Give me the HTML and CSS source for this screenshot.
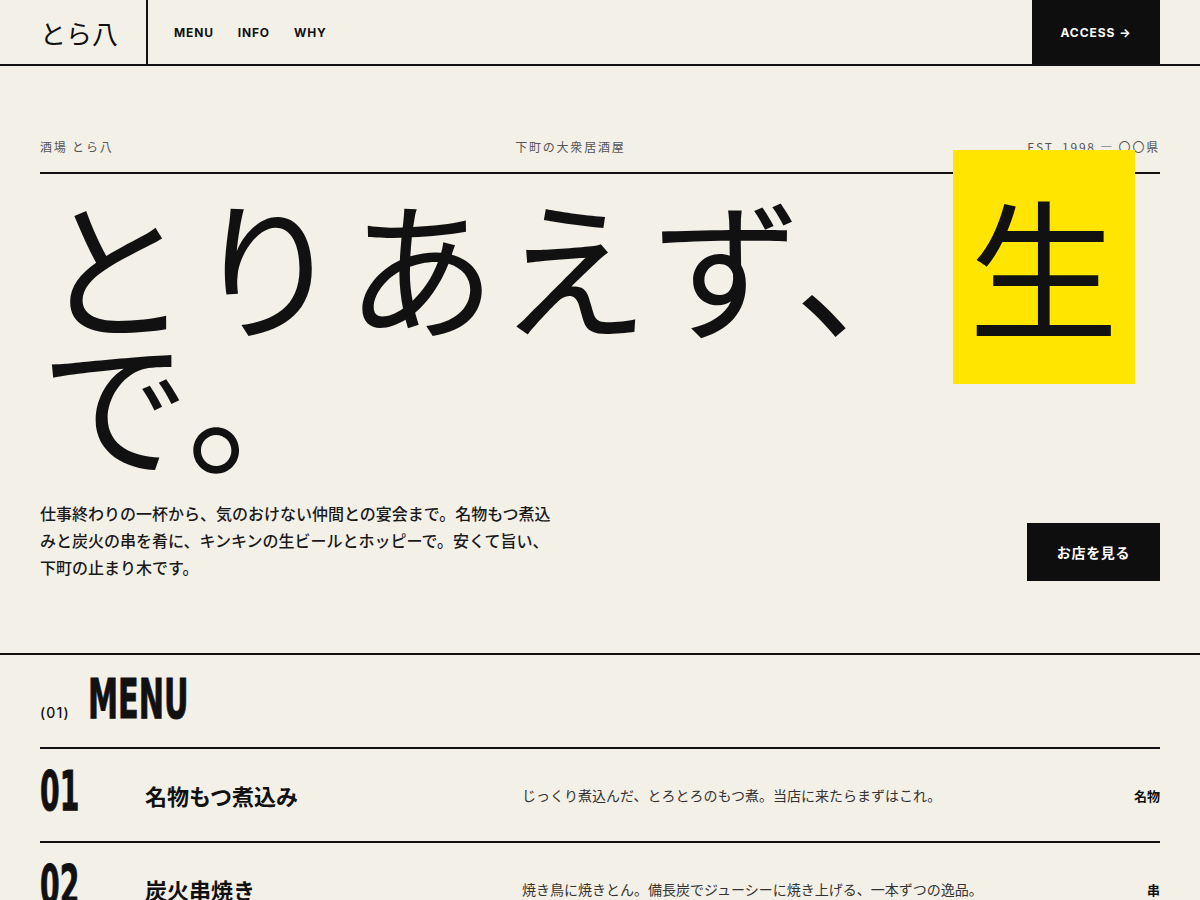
FILE: index.html
```html
<!DOCTYPE html>
<html lang="ja">
<head>
<meta charset="utf-8">
<title>とら八</title>
<link rel="stylesheet" href="styles.css">
</head>
<body>
<header class="site-header">
  <div class="logo">とら八</div>
  <nav class="nav">
    <a class="nav-link" href="#menu">MENU</a>
    <a class="nav-link" href="#info">INFO</a>
    <a class="nav-link" href="#why">WHY</a>
  </nav>
  <a class="access" href="#access">ACCESS →</a>
</header>

<section class="hero">
  <div class="hero-labels">
    <span>酒場 とら八</span>
    <span>下町の大衆居酒屋</span>
    <span>EST. 1998 — 〇〇県</span>
  </div>
  <h1 class="hero-title">とりあえず、<span class="hl">生</span>で。</h1>
  <div class="hero-foot">
    <p class="hero-text">仕事終わりの一杯から、気のおけない仲間との宴会まで。名物もつ煮込みと炭火の串を肴に、キンキンの生ビールとホッピーで。安くて旨い、下町の止まり木です。</p>
    <a class="shop-btn" href="#info">お店を見る</a>
  </div>
</section>

<section class="menu" id="menu">
  <div class="section-head">
    <span class="section-num">(01)</span>
    <h2 class="section-title"><span class="cond">MENU</span></h2>
  </div>
  <div class="menu-row">
    <div class="row-num"><span class="cond">01</span></div>
    <div class="row-name">名物もつ煮込み</div>
    <div class="row-desc">じっくり煮込んだ、とろとろのもつ煮。当店に来たらまずはこれ。</div>
    <div class="row-tag">名物</div>
  </div>
  <div class="menu-row">
    <div class="row-num"><span class="cond">02</span></div>
    <div class="row-name">炭火串焼き</div>
    <div class="row-desc">焼き鳥に焼きとん。備長炭でジューシーに焼き上げる、一本ずつの逸品。</div>
    <div class="row-tag">串</div>
  </div>
</section>
</body>
</html>
```

FILE: styles.css
```css
* { box-sizing: border-box; }
html, body { margin: 0; padding: 0; }
body {
  background: #f3f0e8;
  color: #111;
  font-family: Inter, "Noto Sans CJK JP", sans-serif;
}
a { color: inherit; text-decoration: none; }

.site-header {
  display: flex;
  align-items: stretch;
  height: 66px;
  border-bottom: 2px solid #111;
  padding-right: 40px;
}
.logo {
  display: flex;
  align-items: center;
  padding: 0 28px 0 40px;
  border-right: 2px solid #111;
  font-family: "Noto Sans CJK JP", sans-serif;
  font-size: 26px;
}
.nav {
  display: flex;
  align-items: center;
  gap: 24px;
  padding-left: 26px;
  flex: 1;
}
.nav-link {
  font-size: 12px;
  font-weight: 700;
  letter-spacing: 0.07em;
}
.access {
  display: flex;
  align-items: center;
  justify-content: center;
  width: 128px;
  background: #0e0e0e;
  color: #fff;
  font-size: 12px;
  font-weight: 700;
  letter-spacing: 0.08em;
}

.hero {
  padding: 72px 40px 72px;
  border-bottom: 2px solid #111;
}
.hero-labels {
  position: relative;
  z-index: 0;
  display: flex;
  justify-content: space-between;
  font-family: "Noto Sans CJK JP", sans-serif;
  font-size: 12px;
  line-height: 18px;
  letter-spacing: 0.15em;
  color: #555;
  padding-bottom: 16px;
  border-bottom: 2px solid #111;
}
.hero-title {
  position: relative;
  z-index: 1;
  margin: 21px 0 0;
  font-family: "Noto Sans CJK JP", sans-serif;
  font-weight: 400;
  font-size: 150px;
  line-height: 136px;
  letter-spacing: 3px;
}
.hl {
  background: #ffe500;
  padding: 4px 13px 13px 16px;
  margin-left: 5px;
}
.hero-foot {
  display: flex;
  justify-content: space-between;
  align-items: flex-end;
  margin-top: 33px;
}
.hero-text {
  margin: 0;
  max-width: 520px;
  font-family: "Noto Sans CJK JP", sans-serif;
  font-size: 16px;
  font-weight: 500;
  line-height: 27px;
  color: #1a1a1a;
}
.shop-btn {
  display: flex;
  align-items: center;
  justify-content: center;
  width: 133px;
  height: 58px;
  background: #0e0e0e;
  color: #fff;
  font-family: "Noto Sans CJK JP", sans-serif;
  font-size: 14px;
  font-weight: 700;
  letter-spacing: 0.05em;
}

.menu {
  padding: 0 40px;
}
.cond {
  display: inline-block;
  font-family: "DejaVu Sans Condensed", "DejaVu Sans", sans-serif;
  font-stretch: condensed;
  font-weight: 700;
  transform: scaleX(0.6);
  transform-origin: left center;
  -webkit-text-stroke: 1px #111;
}
.section-head {
  display: flex;
  align-items: baseline;
  gap: 18px;
  padding: 15px 0 20px;
  border-bottom: 2px solid #111;
}
.section-num {
  font-size: 14px;
  font-weight: 500;
  letter-spacing: 0.08em;
}
.section-title {
  margin: 0;
  font-size: 56px;
  line-height: 56px;
  font-weight: 700;
}
.menu-row {
  display: grid;
  grid-template-columns: 105px 377px 1fr auto;
  align-items: center;
  height: 94px;
  border-bottom: 2px solid #111;
}
.row-num {
  font-size: 56px;
  line-height: 56px;
  margin-top: -10px;
}
.row-num .cond {
  transform: scaleX(0.56);
}
.row-name {
  font-family: "Noto Sans CJK JP", sans-serif;
  font-size: 22px;
  font-weight: 700;
}
.row-desc {
  font-family: "Noto Sans CJK JP", sans-serif;
  font-size: 14px;
  color: #333;
}
.row-tag {
  font-family: "Noto Sans CJK JP", sans-serif;
  font-size: 13px;
  font-weight: 700;
}
```
